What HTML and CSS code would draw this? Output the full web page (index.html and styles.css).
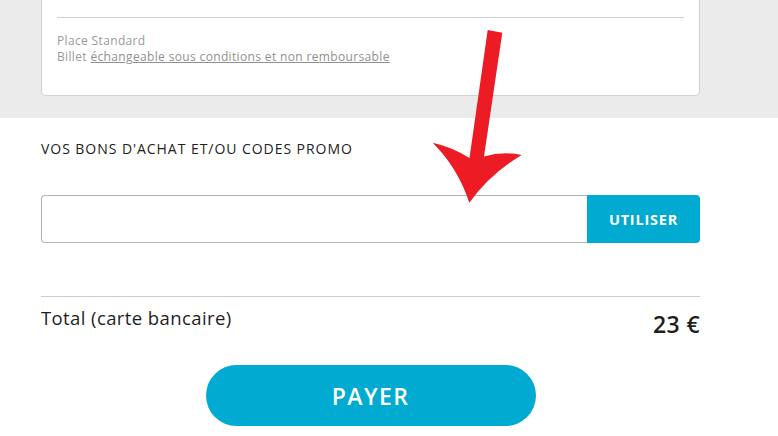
FILE: index.html
```html
<!DOCTYPE html>
<html lang="fr">
<head>
<meta charset="utf-8">
<title>Paiement</title>
<link rel="stylesheet" href="styles.css">
</head>
<body>
<div class="top">
  <div class="card">
    <div class="card-top"></div>
    <div class="info">
      <div>Place Standard</div>
      <div>Billet <a class="link" href="#">échangeable sous conditions et non remboursable</a></div>
    </div>
  </div>
</div>
<div class="main">
  <h2 class="heading">VOS BONS D'ACHAT ET/OU CODES PROMO</h2>
  <div class="promo">
    <input class="promo-input" type="text" aria-label="Code promo">
    <button class="promo-btn" type="button">UTILISER</button>
  </div>
  <div class="total">
    <span class="total-label">Total (carte bancaire)</span>
    <span class="total-price">23 €</span>
  </div>
  <button class="pay" type="button">PAYER</button>
</div>
<svg class="arrow" width="778" height="436" viewBox="0 0 778 436" aria-hidden="true">
  <path d="M487.7,30 L502.3,32.7 L484,156.5 Q503,151 521.7,155 Q490,174 469.3,202.7 Q458,168 432.7,142.7 Q452,147 469.5,158 Z" fill="#ed1c24"/>
</svg>
</body>
</html>
```
FILE: styles.css
```css
html, body {
  margin: 0;
  padding: 0;
  background: #ffffff;
  font-family: "Open Sans", "Liberation Sans", sans-serif;
  overflow: hidden;
}
body {
  position: relative;
  width: 778px;
  height: 436px;
}
.top {
  background: #ebebeb;
  padding: 0 78px 22px 41px;
}
.card {
  background: #ffffff;
  border: 1px solid #d2d2d2;
  border-top: none;
  border-radius: 0 0 5px 5px;
  padding: 0 15px 0 15px;
}
.card-top {
  height: 17px;
  border-bottom: 1px solid #cfcfcf;
}
.info {
  padding: 15px 0 30px 0;
  font-size: 12px;
  line-height: 16px;
  letter-spacing: 0.35px;
  color: #9a9a9a;
}
.link {
  color: #8f8f8f;
  text-decoration: underline;
}
.main {
  padding: 23px 78px 0 41px;
}
.heading {
  margin: 0;
  font-size: 14px;
  line-height: 16px;
  font-weight: 500;
  color: #222222;
  letter-spacing: 0.95px;
}
.promo {
  display: flex;
  margin-top: 38px;
  height: 48px;
}
.promo-input {
  flex: 1;
  box-sizing: border-box;
  height: 48px;
  margin: 0;
  border: 1px solid #b3b3b3;
  border-right: none;
  border-radius: 4px 0 0 4px;
  outline: none;
  background: #fff;
}
.promo-btn {
  width: 113px;
  height: 48px;
  margin: 0;
  padding: 0;
  border: none;
  border-radius: 0 4px 4px 0;
  background: #00aad0;
  color: #ffffff;
  font-family: "Open Sans", "Liberation Sans", sans-serif;
  font-weight: 700;
  font-size: 14.5px;
  letter-spacing: 0.8px;
}
.total {
  display: flex;
  justify-content: space-between;
  align-items: flex-start;
  margin-top: 53px;
  border-top: 1px solid #cccccc;
}
.total-label {
  margin-top: 9px;
  font-size: 18.5px;
  line-height: 24px;
  font-weight: 500;
  letter-spacing: 0.4px;
  color: #1e1e1e;
}
.total-price {
  margin-top: 14px;
  font-size: 23px;
  line-height: 26px;
  font-weight: 600;
  letter-spacing: 0.4px;
  color: #1e1e1e;
}
.pay {
  display: block;
  width: 330px;
  height: 61px;
  margin: 28px auto 0 auto;
  border: none;
  border-radius: 31px;
  background: #00aad0;
  color: #ffffff;
  font-family: "Open Sans", "Liberation Sans", sans-serif;
  font-size: 23px;
  font-weight: 600;
  letter-spacing: 1.4px;
}
.arrow {
  position: absolute;
  left: 0;
  top: 0;
  pointer-events: none;
}
```
